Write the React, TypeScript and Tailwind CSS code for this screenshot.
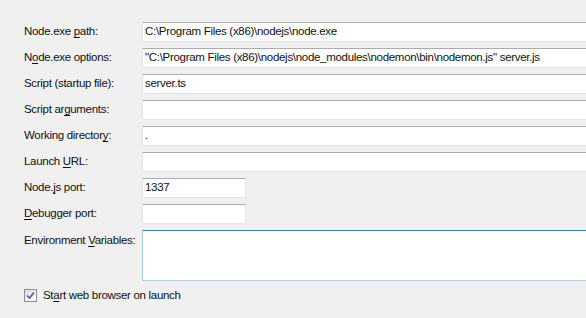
const U = ({ children }: { children: string }) => <span className="underline underline-offset-2">{children}</span>;

const rows: { label: React.ReactNode; value: string; short?: boolean }[] = [
  { label: <>Node.exe <U>p</U>ath:</>, value: 'C:\\Program Files (x86)\\nodejs\\node.exe' },
  { label: <>N<U>o</U>de.exe options:</>, value: '"C:\\Program Files (x86)\\nodejs\\node_modules\\nodemon\\bin\\nodemon.js" server.js' },
  { label: <>Script (startup file):</>, value: 'server.ts' },
  { label: <>Script ar<U>g</U>uments:</>, value: '' },
  { label: <>Working director<U>y</U>:</>, value: '.' },
  { label: <>Launch <U>U</U>RL:</>, value: '' },
  { label: <>Node.<U>j</U>s port:</>, value: '1337', short: true },
  { label: <><U>D</U>ebugger port:</>, value: '', short: true },
];

export default function App() {
  return (
    <div
      className="w-[586px] h-[318px] overflow-hidden bg-[#f0f0f0] text-[11.5px] text-[#111] pl-[24px] pt-[22px]"
      style={{ fontFamily: '"Liberation Sans", Arial, sans-serif' }}
    >
      <div className="flex flex-col gap-[6px]">
        {rows.map((r, i) => (
          <div key={i} className="flex items-center h-[20px]">
            <div className="w-[118px] shrink-0 tracking-[-0.3px]">{r.label}</div>
            <div
              className={`h-[20px] shrink-0 bg-white border border-[#e3e3e3] border-t-[#abadb3] px-[2px] flex items-center whitespace-nowrap tracking-[-0.3px] ${r.short ? 'w-[104px]' : 'w-[460px]'}`}
            >
              {r.value}
            </div>
          </div>
        ))}
        <div className="flex items-start">
          <div className="w-[118px] shrink-0 pt-[2px] tracking-[-0.3px] whitespace-nowrap">
            Environment <U>V</U>ariables:
          </div>
          <div className="h-[51px] w-[460px] shrink-0 bg-white border border-[#a4c9e3] border-t-[#3d7bad] border-b-[#b5cfe7]" />
        </div>
      </div>
      <label className="flex items-center gap-[6px] mt-[6px]">
        <span className="w-[13px] h-[13px] border border-[#8e8f8f] bg-gradient-to-br from-[#dcdcdc] to-white flex items-center justify-center">
          <svg width="9" height="9" viewBox="0 0 9 9">
            <path d="M1 4.5 L3.5 7 L8 1.5" fill="none" stroke="#4a5f97" strokeWidth="1.6" />
          </svg>
        </span>
        <span className="tracking-[-0.3px]">
          St<U>a</U>rt web browser on launch
        </span>
      </label>
    </div>
  );
}
